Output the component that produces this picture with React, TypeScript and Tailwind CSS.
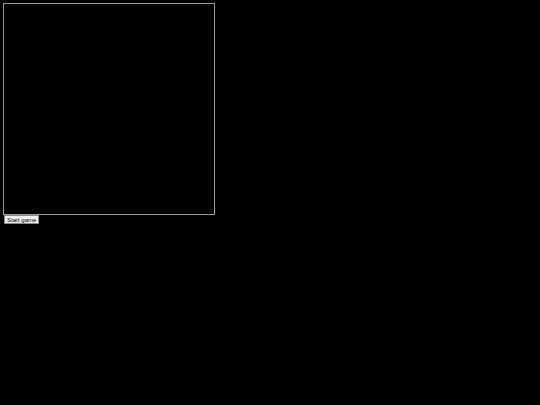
import React from "react";

const App = () => {
  return (
    <div className="min-h-screen w-full bg-black p-[3px]">
      {/* game board */}
      <div className="h-[212px] w-[212px] border border-[#9a9a9a] bg-black" />
      <button className="ml-px block h-[9px] border border-[#888] bg-[#f0f0f0] px-[2px] font-['Liberation_Sans',sans-serif] text-[6px] leading-[6px] text-black">
        Start game
      </button>
    </div>
  );
};

export default App;
